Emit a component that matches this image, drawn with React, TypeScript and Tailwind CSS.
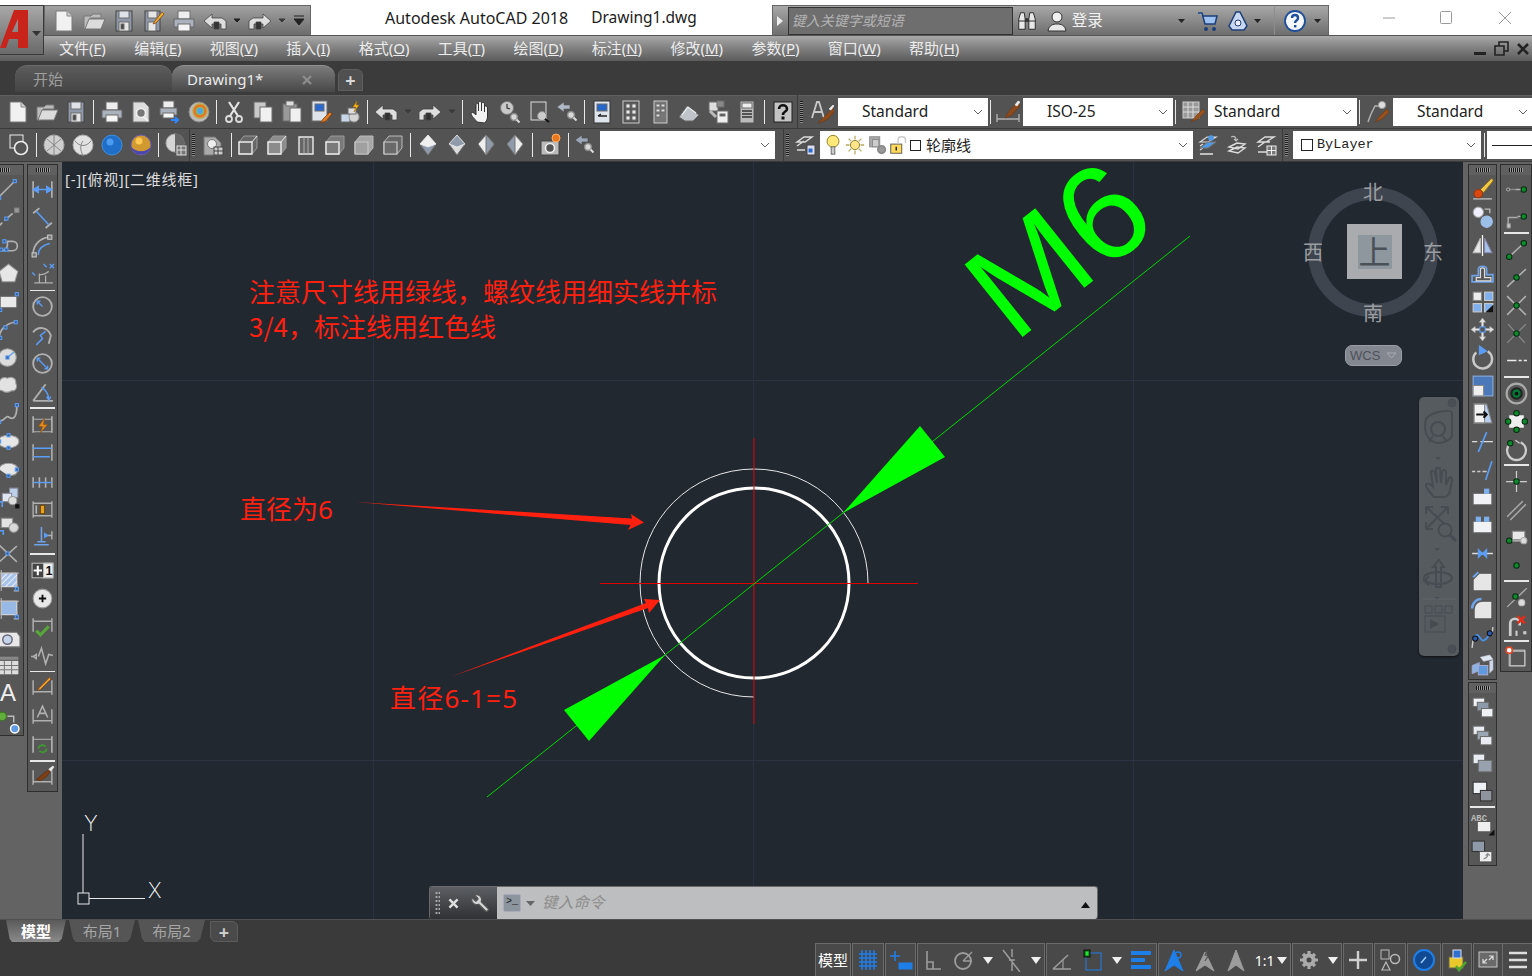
import type { ReactNode } from "react";
import { Wrench } from "lucide-react";

const W = "#ececec";
const G = "#b0b0b0";
const B = "#5b9df5";
const O = "#e08a1e";
const GR = "#0c8a2c";

const p = (d: string, s = G, w = 1.5, f = "none") => <path d={d} stroke={s} strokeWidth={w} fill={f} />;
const r = (x: number, y: number, w: number, h: number, f = W, s = "#6d6d6d") => <rect x={x} y={y} width={w} height={h} fill={f} stroke={s} />;
const c = (x: number, y: number, R: number, f = "none", s = G, w = 1.5) => <circle cx={x} cy={y} r={R} fill={f} stroke={s} strokeWidth={w} />;
const g = (x: number, y: number) => <rect x={x - 1.5} y={y - 1.5} width={3} height={3} fill="#3b5f95" stroke={B} />;
const n = (x: number, y: number) => <circle cx={x} cy={y} r={2.6} fill={GR} stroke="#0a2a10" />;
const mag = (x: number, y: number) => <>{c(x, y, 3.4, "#d8d8d8", "#8a8a8a")}{p(`M${x + 2.5} ${y + 2.5}l3 3`, "#ddd", 2)}</>;
const dimEnds = <>{p("M3 4v16M21 4v16", G, 1.6)}</>;
const dimBase = <>{p("M3 5v14M21 5v14M3 16h18", G, 1.4)}</>;
const box = (f1: string, f2: string) => <>{p("M3 9l5-6h13v12l-5 6H3z", "#9b9b9b", 1, f2)}{p("M3 9h13v12H3z", W, 1.4, f1)}{p("M16 9l5-6", W, 1)}</>;
const gem = (a: string, b: string) => <>{p("M12 2l8 9-8 11-8-11z", "#777", 1, a)}{p("M4 11l8-9 8 9-8 3z", "#eee", 0.8, b)}</>;
const card = (a = "#e9edf3", b = "#e9edf3", d = "#9aa6b4") => <>{r(3, 3, 11, 8, a)}{r(7, 8, 11, 8, d)}{r(10, 13, 11, 8, b)}</>;

const icons: Record<string, ReactNode> = {
  new: <>{p("M4 2h11l5 5v15H4z", "#7a7a7a", 1, "#f1f1f1")}{p("M15 2v5h5", "#8a8a8a", 1, "#cfcfcf")}</>,
  open: <>{p("M2 7h7l2-2h8v4H8l-3 11H2z", "#777", 1, "#bcbcbc")}{p("M7 10h16l-4 10H3z", "#777", 1, "#dcdcdc")}</>,
  save: <>{r(4, 2, 16, 20, "#8e98a8", "#444")}{r(7, 2, 10, 7, "#dfe3e8")}{r(7, 13, 10, 9, "#e6e6e6")}{r(9, 15, 3, 5, "#444")}</>,
  saveas: <>{r(3, 2, 15, 20, "#8e98a8", "#444")}{r(6, 13, 8, 9, "#e6e6e6")}{r(6, 2, 9, 7, "#e6e6e6")}{p("M20 3l-7 9-2 3 3-1 8-9z", "#8a4a10", 0.8, "#f0b030")}</>,
  print: <>{r(6, 2, 12, 8, "#eee")}{p("M2 10h20v8H2z", "#666", 1, "#aab2bd")}{r(6, 15, 12, 7, "#f5f5f5")}</>,
  preview: <>{p("M4 2h11l5 5v15H4z", "#777", 1, "#ddd")}{c(12, 13, 4.5, "#777", "#eee", 1.6)}{p("M15 17l4 4", "#eee", 2)}</>,
  plot: <>{r(5, 1, 11, 7, "#eee")}{p("M2 8h17v7H2z", "#666", 1, "#aab2bd")}{r(5, 13, 11, 5, "#f5f5f5")}{p("M13 20h7m-3-3l3 3-3 3", "#2f86ff", 2)}</>,
  publish: <>{c(12, 12, 10, "#bcbcbc", "#888", 1)}{c(13, 11, 7, "#e2752a", "#c9a13a", 1.5)}{c(13, 11, 3.5, "#4fa3e8", "#88c060", 1.2)}</>,
  cut: <>{p("M7 2l9 14M17 2L8 16", "#e5e5e5", 2.2)}{c(7, 19, 3, "none", "#dcdcdc", 1.8)}{c(17, 19, 3, "none", "#dcdcdc", 1.8)}</>,
  copy: <>{r(3, 2, 12, 16, "#c9c9c9")}{r(9, 7, 12, 15, "#f0f0f0")}</>,
  paste: <>{r(3, 4, 14, 17, "#999")}{r(6, 1, 8, 5, "#ddd")}{r(10, 8, 11, 14, "#f0f0f0")}</>,
  match: <>{r(3, 1, 15, 20, "#dfe4ea")}{r(6, 4, 9, 7, "#2a6ad0")}{p("M21 12l-7 7-2 4 5-2 6-7z", "#7a3a10", 0.8, "#dd7c22")}</>,
  mprop: <>{r(3, 14, 9, 8, "#c8d6ea")}{c(16, 17, 5, "#d5d5d5", "#999", 1)}{r(10, 8, 8, 6, "#ddd")}{p("M19 1l-4 6h3l-2 5 5-7h-3z", "#b06a00", 0.6, "#ffc21a")}</>,
  undo: <>{p("M1 12l8-7v4h10l4 3v8h-5v-5H9v4z", "#444", 0.8, "#dedede")}{p("M11 13h5v7h-5z", "#444", 0.8, "#333")}</>,
  redo: <>{p("M23 12l-8-7v4H5l-4 3v8h5v-5h9v4z", "#444", 0.8, "#dedede")}{p("M8 13h5v7H8z", "#444", 0.8, "#333")}</>,
  drop: <>{p("M9 10h6l-3 3z", "#222", 1, "#222")}</>,
  dropg: <>{p("M9 10h6l-3 3z", "#3b3b3b", 1, "#3b3b3b")}</>,
  pan: <>{p("M8 22c-2-3-6-6-6-9 1-1.500 3 0 5 2V5c0-2 2.500-2 2.500 0v6-8c0-2 3-2 3 0v8-7c0-2 3-2 3 0v8-5c0-2 3-1 3 1v9c0 3-2 5-3 6z", "#333", 1, "#f2f2f2")}</>,
  zoomrt: <>{c(9, 8, 6.5, "#c9c9c9", "#777", 1)}{p("M9 4v4l3 1", "#333", 1.2)}{mag(16, 17)}</>,
  zoomwin: <>{r(4, 2, 15, 18, "#5a5a5a", "#dcdcdc")}{c(15, 16, 4.5, "#ccc", "#888", 1)}{p("M18 19l4 3", "#111", 2)}</>,
  zoomprev: <>{p("M1 7l7-5v3h6v4H8v3z", "#555", 0.6, "#aeb8c6")}{mag(15, 15)}</>,
  props: <>{r(4, 1, 16, 22, "#dfe5ec", "#333")}{r(7, 4, 10, 7, "#2668c8")}{p("M8 16h9M8 16l3-2", "#222", 1.4)}</>,
  dc: <>{r(4, 1, 16, 22, "#555", "#ccc")}{r(7, 4, 4, 4, "#eee")}{r(13, 4, 4, 4, "#eee")}{r(7, 10, 4, 4, "#eee")}{r(13, 10, 4, 4, "#eee")}{r(7, 16, 4, 4, "#eee")}{r(13, 16, 4, 4, "#eee")}</>,
  tp: <>{r(6, 1, 13, 22, "#777", "#ccc")}{r(8, 4, 4, 3, "#ddd")}{r(13, 4, 4, 3, "#ddd")}{r(8, 9, 4, 3, "#ddd")}{r(13, 9, 4, 3, "#ddd")}{r(8, 14, 4, 3, "#ddd")}</>,
  ssm: <>{p("M2 17l8-11 12 9-6 6H8z", "#666", 1, "#bfc4ca")}{p("M5 15l6-8 8 6", "#eee", 1.2)}</>,
  markup: <>{r(3, 2, 9, 9, "#ddd")}{r(11, 1, 7, 6, "#888")}{r(11, 11, 11, 12, "#eee")}{r(14, 14, 5, 2, "#555")}{p("M4 11l6 6", "#bbb", 3)}</>,
  calc: <>{r(5, 1, 14, 22, "#bbb", "#555")}{r(7, 3, 10, 5, "#eee")}{p("M7 11h10M7 14h10M7 17h10", "#333", 1.5)}</>,
  helpq: <>{r(3, 2, 18, 20, "#c4c4c4", "#222")}{p("M8 9c0-5 8-5 8 0 0 3-4 2-4 6", "#111", 2.6)}{r(11, 17, 2, 2, "#111", "#111")}</>,
  txtstyle: <>{p("M2 18L7 2h2l5 16M4 12h8", "#c8c8c8", 1.8)}{p("M23 8l-8 8-7 7 4-1 6-3 7-8z", "#6e3512", 0.6, "#8a4a1d")}{p("M23 5l-4 4 2 1 3-4z", "#eee", 0.6, "#eee")}</>,
  dimstyle: <>{p("M1 14v8M23 14v8M1 19h22", G, 1.4)}{p("M22 2l-9 9-4 7 7-3 8-9z", "#6e3512", 0.6, "#8a4a1d")}{p("M22 1l-3 4 2 1 3-4z", "#eee", 0.6, "#eee")}</>,
  tabstyle: <>{r(2, 2, 16, 16, "#999", "#ccc")}{p("M2 7h16M2 12h16M7 2v16M12 2v16", "#ddd", 1)}{p("M22 9l-7 7-5 6 7-3 7-7z", "#6e3512", 0.6, "#9a521d")}</>,
  mlstyle: <>{p("M3 22l3-8 4-8h6", G, 1.5)}{c(17, 5, 3.6, "#ddd", "#999", 1)}{p("M22 9l-7 7-5 6 7-3 7-7z", "#6e3512", 0.6, "#9a521d")}</>,
  vp: <>{r(3, 2, 13, 13, "#555", "#eee")}{c(14, 15, 6.5, "#555", "#eee", 1.6)}</>,
  s1: <>{c(12, 12, 10, "#cfcfcf", "#aaa", 1)}{p("M5 6l14 12M19 6L5 18M12 2v20", "#888", 1)}</>,
  s2: <>{c(12, 12, 10, "#e2e2e2", "#aaa", 1)}{p("M4 8c5 6 11 6 16 0M12 22c-3-4-3-10 0-14", "#888", 1)}</>,
  s3: <>{c(12, 12, 10, "#1f6ec8", "#3f8ee0", 1)}{c(10, 9, 3.5, "#4b9bef", "#4b9bef", 0)}</>,
  s4: <>{c(12, 12, 10, "#d09a30", "#6a5ab0", 1)}{p("M3 15c4 5 14 5 18 0-2 8-16 8-18 0z", "#4a46b0", 1, "#4a46b0")}{c(10, 8, 3.5, "#ffc850", "#ffc850", 0)}</>,
  mat: <>{c(11, 10, 9, "#d5d5d5", "#aaa", 1)}{p("M11 1a9 9 0 010 18", "#666", 1, "#666")}{r(13, 13, 9, 9, "#777", "#ddd")}{p("M13 17h9M17 13v9", "#ddd", 1)}</>,
  render: <>{p("M3 4h11l6 6v12H3z", "#777", 1, "#aaa")}{c(11, 11, 4.5, "#eee", "#777", 1)}{r(13, 14, 9, 8, "#ccc", "#444")}{p("M13 18h9M17 14v8", "#444", 1)}</>,
  b1: box("none", "#676767"),
  b2: box("none", "#8c8c8c"),
  b3: <>{p("M5 4h14v17H5z", W, 1.4, "#666")}{p("M10 4v17M14 4v17", G, 1)}</>,
  b4: <>{p("M3 9l5-6h13v12l-5 6H3z", "#999", 1, "#7a7a7a")}{p("M3 9h13v12H3z", W, 1.4, "none")}</>,
  b5: <>{p("M3 9l5-6h13v12l-5 6H3z", "#bbb", 1, "#a6a6a6")}{p("M3 9h13v12H3z", "#c6c6c6", 1.2, "#a0a0a0")}</>,
  b6: <>{p("M3 9l5-6h13v12l-5 6H3z", "#bbb", 1, "#666")}{p("M3 9h13v12H3z", "#ccc", 1.2, "#6a6a6a")}</>,
  g1: gem("#8f9aaa", "#f0f0f0"),
  g2: gem("#dcdcdc", "#8f9aaa"),
  g3: <>{p("M12 2l8 9-8 11-8-11z", "#777", 1, "#eee")}{p("M12 2v20l8-11z", "#777", 1, "#8f9aaa")}</>,
  g4: <>{p("M12 2l8 9-8 11-8-11z", "#777", 1, "#8f9aaa")}{p("M12 2v20l8-11z", "#777", 1, "#eee")}</>,
  cam: <>{r(3, 8, 18, 14, "#bbb", "#444")}{c(12, 15, 4.5, "#555", "#eee", 1.6)}{c(18, 5, 4, "#e8781e", "#ffb060", 1)}</>,
  ucsb: <>{p("M1 7l7-5v3h6v4H8v3z", "#444", 0.6, "#9aa5b5")}{mag(14, 14)}</>,
  layprop: <>{p("M3 9l7-5h8l-7 5zM3 13l7-5M3 17h8", "#ddd", 1.4)}{r(13, 12, 8, 10, "#dde", "#444")}{r(15, 16, 3, 3, "#2a6ad0", "#2a6ad0")}</>,
  bulb: <>{c(12, 8, 6.5, "#ffe87a", "#8a7a20", 1)}{r(10, 14, 4, 8, "#ccc", "#666")}</>,
  sun: <>{c(12, 12, 5, "#ffe48a", "#8a7a20", 1)}{p("M12 2v4M12 18v4M2 12h4M18 12h4M5 5l3 3M16 16l3 3M19 5l-3 3M8 16l-3 3", "#b8a860", 1.4)}</>,
  freeze: <>{r(4, 3, 11, 11, "#aaa", "#888")}{r(7, 6, 7, 8, "#ccc", "#888")}{c(17, 17, 4, "#999", "#888", 2)}</>,
  lock: <>{r(3, 11, 12, 10, "#ffd95a", "#555")}{p("M11 11V6c0-4 8-4 8 0v4", "#ccc", 1.6)}{p("M9 14v4", "#222", 1.6)}</>,
  lay1: <>{p("M4 9l7-5h9l-8 5zM4 13l3-2M4 17l3-2", "#ddd", 1.2)}{p("M4 21h13", "#ddd", 1.6)}{p("M4 15l8-6h8l-8 6z", "#777", 1, "#4e9ae8")}{c(15, 5, 2.8, "#4e9ae8", "#4e9ae8", 0)}</>,
  lay2: <>{p("M6 4c4-2 5 1 5 3m-2-1l2 2 2-2", "#bbb", 1.2)}{p("M4 14l8-4 8 1-7 5zM4 18l8-4 8 1-7 5z", "#ddd", 1.4)}</>,
  lay3: <>{p("M4 9l7-5h9l-8 5zM4 14l7-5h5M4 19h9", "#ddd", 1.4)}{r(13, 13, 9, 9, "#777", "#eee")}{p("M13 17.500h9M17.500 13v9", "#eee", 1)}</>,

  line: <>{p("M3 19L17 5", G, 1.5)}{g(3, 20)}{g(18, 4)}</>,
  xline: <>{p("M2 21l4-4M8 15l8-7", G, 1.6)}{p("M18 6l3-2", "#777", 3)}{r(18, 3, 4, 4, "#999", "#888")}{g(10, 13)}</>,
  pline: <>{p("M3 15c4 4 8 0 8-4V8h5c6 0 6 9 0 9H7", G, 1.6)}{g(8, 8)}{g(5, 16)}{g(10, 16)}</>,
  polygon: <>{p("M12 3l9 7-3 10H6L3 10z", "#999", 1, "#e6e6e6")}</>,
  rect: <>{r(4, 7, 16, 11, "#eaeaea", "#666")}{g(20, 5)}{g(4, 20)}</>,
  arc: <>{p("M3 21c0-9 7-15 15-16", G, 1.6)}{g(4, 20)}{g(9, 10)}{g(19, 5)}</>,
  circle: <>{c(11, 12, 8.5, "#dcdcdc", "#999", 1)}{p("M11 12l6-5", B, 1.2)}{g(11, 12)}</>,
  revcloud: <>{p("M4 7c1-3 5-3 7-2 4-2 9 0 8 5 2 3 0 8-4 7-3 2-7 2-9 0-4 0-5-5-3-7-1-1 0-3 1-3z", "#999", 1, "#e2e2e2")}</>,
  spline: <>{p("M3 19c4 1 6-4 8-4s3 3 6 1 3-7 3-11", G, 1.7)}{g(3, 20)}{g(20, 4)}</>,
  ellipse: <>{p("M2 12c0-4 5-6 10-6s10 2 10 6-5 6-10 6S2 16 2 12z", "#999", 1, "#e6e6e6")}{g(12, 6)}{g(12, 18)}{g(3, 12)}</>,
  earc: <>{p("M3 12c0-4 5-6 9-6s9 2 9 6-4 6-9 6", "#999", 1, "#e6e6e6")}{g(12, 18)}{g(20, 12)}</>,
  insert: <>{r(13, 3, 8, 9, "#bcd0ea", "#889")}{r(6, 8, 9, 8, "#dfe6ef", "#889")}{c(16, 15, 4, "#ddd", "#999", 1)}{p("M2 16h4v5", B, 1.5)}{r(19, 19, 3, 3, "#111", "#111")}</>,
  block: <>{r(5, 5, 11, 9, "#e2e2e2", "#888")}{c(17, 14, 4.5, "#d8d8d8", "#999", 1)}{p("M2 17h5v4", B, 1.5)}</>,
  xl: <>{p("M2 21L20 5M2 3l18 17", G, 1.5)}{g(11, 12)}</>,
  hatch: <>{r(5, 4, 15, 13, "#a8c4ea", "#ddd")}{p("M5 10l6-6M5 15l11-11M9 17l11-11M15 17l5-5", "#eef", 1)}{p("M2 4h20M5 1v20M20 14v7M17 21h5", "#bbb", 1)}{g(20, 19)}</>,
  grad: <>{r(5, 4, 15, 13, "#98b8e6", "#ddd")}{p("M2 4h20M5 1v20M20 14v7M17 21h5", "#bbb", 1)}{g(20, 19)}</>,
  region: <>{p("M2 7h18l3 4v10H2z", "#777", 1, "#e8e8e8")}{c(11, 14, 4.5, "#c6d6ea", "#667", 1.4)}</>,
  table: <>{r(1, 3, 21, 18, "#ddd", "#555")}{r(1, 3, 21, 4, "#888", "#555")}{p("M1 12h21M1 16h21M8 7v14M15 7v14", "#777", 1)}</>,
  add: <>{c(6, 7, 4, "#62ae3a", "#3d7a20", 1)}{c(18, 19, 4, "#5f9ae0", "#fff", 1.4)}{p("M11 7h6v6", "#bbb", 1.4)}</>,

  dl: <>{dimEnds}{p("M3 12h18M3 12l5-3v6zM21 12l-5-3v6z", B, 1.3, B)}</>,
  da: <>{p("M3 8l6-5M15 22l6-5", G, 1.8)}{p("M6 6l12 13", B, 1.5)}</>,
  darc: <>{p("M3 20C3 11 10 5 18 4", G, 1.7)}{p("M8 21c0-6 5-10 11-11", B, 1.5)}{r(17, 2, 4, 4, "#777", "#ccc")}{r(2, 19, 4, 4, "#777", "#ccc")}</>,
  dord: <>{p("M4 20h18M9 11v9M15 13v7M9 12c4 1 6-1 9-3", G, 1.2)}{p("M2 10l3 3M13 2l3 3M19 2l4 4M23 2l-4 4", B, 1.3)}</>,
  dr: <>{c(12, 12, 9, "none", G, 1.8)}{p("M12 12L7 7m3 0H7v3", B, 1.3)}</>,
  dj: <>{p("M3 9c4-6 14-6 17 3l-2 8", G, 1.8)}{p("M6 21l6-6-2-3 5-4", B, 1.4)}</>,
  dd: <>{c(12, 12, 9, "none", G, 1.8)}{p("M7 7l10 10M7 10V7h3M17 14v3h-3", B, 1.3)}</>,
  dan: <>{p("M3 21h19M3 21L15 5", G, 1.7)}{p("M11 8c4 2 7 7 7 12m-2-3l2 3 2-3", B, 1.4)}</>,
  dq: <>{dimEnds}{p("M3 7h18M3 19h18", G, 1)}{p("M14 6l-6 8h4l-2 6 7-8h-4z", "#8a4a00", 0.5, O)}</>,
  dbase: <>{p("M3 4v16M21 4v16", G, 1.5)}{p("M3 8h18M3 16h16", B, 1.5)}</>,
  dcont: <>{p("M3 8v10M9 8v10M15 8v10M21 8v10", G, 1.5)}{p("M3 13h18", B, 1.4)}</>,
  dsp: <>{p("M3 4v16M21 4v16M3 6h18M3 18h18", G, 1.3)}{r(10, 8, 4, 8, "#e8a020", "#704a00")}{p("M6 8v8", G, 1.6)}</>,
  dbr: <>{p("M11 2v14M4 19h14M7 16h8", "#6ea3ea", 1.5)}{p("M14 10h7M21 6v8", G, 1.4)}{p("M14 8v4l3-2z", B, 1, B)}</>,
  dtol: <>{r(2, 5, 20, 14, "#444", "#bbb")}{r(13, 5, 9, 14, "#eee", "#bbb")}{p("M7.500 7.500v9M3.500 12h8", "#fff", 2)}<text x="15" y="16.500" fontSize="12" fontWeight="700" fontFamily="Liberation Sans" fill="#111">1</text></>,
  dcen: <>{c(12, 12, 9, "#e8e8e8", "#9a9a9a", 1)}{p("M8.500 12h7M12 8.500v7", "#111", 1.8)}</>,
  dins: <>{p("M3 3v13M21 3v13M3 6h18", G, 1.4)}{p("M6 15l4 4 8-8", "#57a63a", 3)}</>,
  djl: <>{p("M1 13h3M3 13l3-2v4zM8 13l3-8 4 15 3-9 4 1", G, 1.5)}</>,
  ded: <>{dimBase}{p("M19 2L9 12l-2 3 3-1 10-10z", "#7a3a10", 0.6, "#f0a030")}</>,
  dte: <>{dimBase}{p("M7 13l5-11 5 11M9 9h6", G, 1.5)}</>,
  dup: <>{dimEnds}{p("M3 7h18", G, 1)}{p("M8 16a4 4 0 017-2m1 2a4 4 0 01-7 2", "#3f9a30", 1.7)}</>,
  dst: <>{dimBase}{p("M22 2l-9 6-7 6 4 1 6-4z", "#5a2a0a", 0.6, "#7c3f18")}{p("M22 1l-4 3 2 2 3-4z", "#eee", 0.6, "#eee")}</>,

  erase: <>{p("M3 21h18", G, 1.5)}{p("M20 2c1-1 3 1 2 2l-9 11-3-3z", "#8a6a10", 0.8, "#f2c84a")}{c(8, 16, 4, "#d8480f", "#a03000", 0.8)}</>,
  cpy: <>{c(8, 7, 5, "#eef", "#999", 1)}{c(16, 16, 5.500, "#9cbfe8", "#9cbfe8", 1)}{p("M14 4h5v4", "#bbb", 1.3)}</>,
  mir: <>{p("M12 2v20", "#fff", 1.2)}{p("M10 5v14H3z", "#bbb", 1, "#e8e8e8")}{p("M14 5v14h7z", "#88a", 1, "#a8c4ea")}</>,
  off: <>{p("M2 20v-6h6V8c0-4 8-4 8 0v5h6v7z", "#6ea3ea", 1.6)}{p("M6 19h14v-3h-6V8c0-2-4-2-4 0v8H6z", "#ddd", 1.2)}</>,
  arr: <>{r(3, 3, 8, 8, "#eee", "#888")}{r(14, 3, 8, 8, "#7fb0ee", "#ccc")}{r(3, 14, 8, 8, "#7fb0ee", "#ccc")}{r(14, 14, 8, 8, "#7fb0ee", "#ccc")}{p("M16 22l6-6v6z", "#111", 1, "#111")}</>,
  mov: <>{p("M12 1l3 4h-2v5h-2V5H9zM12 23l3-4h-2v-5h-2v5H9zM1 12l4-3v2h5v2H5v2zM23 12l-4-3v2h-5v2h5v2z", "#aaa", 0.5, "#e2e2e2")}{r(9.500, 9.500, 5, 5, "#555", B)}</>,
  rot: <>{p("M6 7a9 9 0 1011-1", "#c8c8c8", 2.4)}{p("M9 1l7 5-7 3z", B, 1, B)}</>,
  scl: <>{r(3, 3, 19, 19, "#4b78b8", "#8fb0e0")}{r(3, 12, 10, 10, "#eee", "#888")}</>,
  str: <>{p("M4 3h12l5 18H4z", "#888", 1, "#b6cfee")}{p("M4 3h10v18H4z", "#888", 1, "#f2f2f2")}{p("M6 13h10m-3-3l3 3-3 3", "#111", 2)}</>,
  trim: <>{p("M2 12h5M10 12h12", "#ddd", 1.2)}{p("M8 22L16 3", B, 1.6)}</>,
  ext: <>{p("M2 14h3M7 14h3M12 14h4", "#ccc", 1.4)}{p("M15 22l6-18", B, 1.6)}</>,
  brk: <>{r(3, 8, 18, 11, "#f0f2f5", "#666")}{r(14, 4, 4, 4, "#7fb0ee", "#7fb0ee")}</>,
  brk2: <>{r(3, 8, 18, 11, "#f0f2f5", "#666")}{r(6, 4, 4, 4, "#7fb0ee", "#7fb0ee")}{r(14, 4, 4, 4, "#7fb0ee", "#7fb0ee")}</>,
  join: <>{p("M2 12h20", "#ddd", 1.4)}{p("M8 8l4 4-4 4zM16 8l-4 4 4 4z", B, 1, B)}</>,
  cham: <>{p("M9 4h12v17H3V10z", "#555", 1, "#e6e6e6")}{p("M3 8l5-5", "#6ea3ea", 2)}</>,
  fil: <>{p("M12 4h9v17H4v-9c0-5 4-8 8-8z", "#555", 1, "#e6e6e6")}{p("M2 11c0-5 4-9 9-9", "#6ea3ea", 2.4)}</>,
  bl: <>{p("M2 22l1-8M22 2l-1 8", "#ccc", 1.4)}{p("M4 12c4-7 6 4 9 3s5-5 6-6", "#4a90e8", 1.8)}{c(5, 13, 2.500, "#2a5ab0", "#111", 1)}{c(19, 8, 2.500, "#2a5ab0", "#111", 1)}</>,
  expl: <>{p("M10 4l9-2 3 4-9 2z", "#ccd", 0.6, "#dfe7f2")}{p("M2 12l7-3v8l-7 3z", "#aac", 0.6, "#8eb2e2")}{r(8, 12, 9, 9, "#5f9ae0", "#aac")}{p("M19 8l3-1v9l-3 3z", "#ccd", 0.6, "#cfdcf0")}</>,

  c1: <>{r(3, 3, 11, 8, "#f0f2f6")}{r(7, 7, 11, 8, "#8c99a8")}{r(11, 13, 11, 8, "#eef1f5")}</>,
  c2: card(),
  c3: <>{r(3, 3, 11, 9, "#e9edf3")}{r(8, 9, 13, 11, "#98a2ae")}</>,
  c4: <>{r(3, 3, 13, 11, "#eef1f5", "#333")}{r(10, 11, 11, 10, "#8e959e", "#333")}</>,
  c5: <><text x="1" y="10" fontSize="8.500" fontWeight="700" fontFamily="Liberation Mono" fill="#bbb">ABC</text>{r(7, 10, 13, 10, "#eee", "#555")}{p("M19 23l4-4v4z", "#111", 1, "#111")}</>,
  c6: <>{r(2, 2, 12, 10, "#8f9aa8", "#333")}{r(9, 12, 12, 10, "#eee", "#555")}{p("M13 19c2 0 4-2 4-4m-2 1l2-2 2 2", "#888", 1.2)}</>,

  n1: <>{p("M4 12h7", "#888", 1.4)}{c(4, 12, 1.5, "#444", "#aaa", 1)}{p("M11 12h6", G, 1.4)}{n(19, 12)}</>,
  n2: <>{p("M4 21v-9h9", "#aaa", 1.4, "none")}{r(3, 18, 3, 4, "#ccc", "#999")}{p("M13 11h4", G, 1.4)}{n(19, 11)}</>,
  n3: <>{p("M5 19L19 6", G, 1.5)}{n(5, 19)}{n(19, 6)}</>,
  n4: <>{p("M3 21L21 4", G, 1.5)}{n(12, 12)}</>,
  n5: <>{p("M3 3l18 18M21 3L3 21", G, 1.5)}{n(12, 12)}</>,
  n6: <>{p("M4 3l16 18M21 3L3 21", "#888", 1.3, "none")}{n(12, 12)}</>,
  n7: <>{p("M3 11h9M14 11h3M19 11h3", W, 1.5)}</>,
  n8: <>{c(12, 12, 9.500, "none", "#aaa", 2)}{c(12, 12, 5, "#073", "#222", 2)}{c(12, 12, 1.8, "#111", "#111", 0)}</>,
  n9: <>{p("M7 8h10v8H7z", "#eee", 4, "#eee")}{n(12, 4)}{n(12, 20)}{n(4, 12)}{n(20, 12)}</>,
  n10: <>{p("M8 5a9 9 0 108 0", "#ccc", 2.2)}{p("M11 3l4 3", "#ccc", 1.2)}{n(6, 6)}</>,
  n11: <>{p("M12 2v20M2 12h20", "#ccc", 1.2)}{n(12, 12)}</>,
  n12: <>{p("M3 19L18 4M6 22L21 7", "#aaa", 1.4)}</>,
  n13: <>{r(8, 6, 12, 8, "#e8e8e8", "#888")}{p("M4 15h14", "#aaa", 2)}{n(5, 15)}{c(19, 15, 3, "#ddd", "#aaa", 1)}</>,
  n14: <>{n(12, 12)}</>,
  n15: <>{p("M3 21L22 3", "#aaa", 1.3)}{n(11, 11)}{c(17, 17, 3, "#ddd", "#bbb", 1)}</>,
  n16: <>{p("M6 22V10c0-6 9-6 9 0v2", "#ccc", 2.6)}{p("M12 22v-5", "#ccc", 2)}{r(19, 18, 2, 2, "#ccc", "#ccc")}{p("M13 3l7 7M20 3l-7 7", "#e0301a", 2.4)}</>,
  n17: <>{r(5, 5, 15, 15, "none", "#ccc")}{r(6, 6, 14, 14, "none", "#bbb")}{c(5, 5, 3, "#fff", "#e04a28", 1.6)}</>,
};

function Ico({ name, size = 24 }: { name: string; size?: number }) {
  return (
    <svg width={size} height={size} viewBox="0 0 24 24" className="shrink-0">
      {icons[name]}
    </svg>
  );
}

function Cell({ name, w = 29 }: { name: string; w?: number }) {
  return (
    <div className="flex items-center justify-center h-full shrink-0" style={{ width: w }}>
      <Ico name={name} />
    </div>
  );
}

function Sep({ w = 7 }: { w?: number }) {
  return (
    <div className="flex items-center justify-center h-full shrink-0" style={{ width: w }}>
      <div className="w-px h-[24px] bg-[#e8e8e8]" />
    </div>
  );
}

function Grip() {
  return <div className="w-[3px] h-[22px] mx-[2px] shrink-0 bg-[repeating-linear-gradient(to_bottom,#1c1c1c_0,#1c1c1c_1px,#8a8a8a_1px,#8a8a8a_2px)]" />;
}

function Combo({ width, text, textClass = "pl-[24px]", className = "" }: { width: number | string; text?: ReactNode; textClass?: string; className?: string }) {
  return (
    <div className={`relative flex items-center bg-white h-[28px] shrink-0 text-[#222] text-[15.500px] ${className}`} style={{ width }}>
      <div className={`flex items-center ${textClass}`}>{text}</div>
      <svg width="10" height="6" viewBox="0 0 10 6" className="absolute right-[5px] top-[11px]">
        <path d="M1 1l4 4 4-4" stroke="#666" fill="none" />
      </svg>
    </div>
  );
}

function Toolbar1() {
  return (
    <div className="flex items-stretch h-[36px] bg-[#3b3b3b] pt-[3px]">
      <div className="flex items-center w-[797px] bg-[#535353] pl-[3px] border-t border-[#5f5f5f]">
        <Cell name="new" /><Cell name="open" /><Cell name="save" /><Sep />
        <Cell name="print" /><Cell name="preview" /><Cell name="plot" /><Cell name="publish" /><Sep w={6} />
        <Cell name="cut" /><Cell name="copy" /><Cell name="paste" /><Cell name="match" /><Cell name="mprop" /><Sep />
        <Cell name="undo" /><Cell name="dropg" w={15} /><Cell name="redo" /><Cell name="dropg" w={15} /><Sep />
        <Cell name="pan" /><Cell name="zoomrt" /><Cell name="zoomwin" /><Cell name="zoomprev" /><Sep w={5} />
        <Cell name="props" /><Cell name="dc" /><Cell name="tp" /><Cell name="ssm" /><Cell name="markup" /><Cell name="calc" /><Sep />
        <Cell name="helpq" />
      </div>
      <div className="flex items-center flex-1 ml-[1px] bg-[#535353] border-t border-[#5f5f5f] overflow-hidden">
        <Grip />
        <Cell name="txtstyle" w={33} />
        <Combo width={150} text="Standard" />
        <Sep w={4} />
        <Cell name="dimstyle" w={31} />
        <Combo width={150} text="ISO-25" />
        <Sep w={4} />
        <Cell name="tabstyle" w={31} />
        <Combo width={149} text="Standard" textClass="pl-[6px]" />
        <Sep w={4} />
        <Cell name="mlstyle" w={32} />
        <Combo width={140} text="Standard" />
      </div>
    </div>
  );
}

function Toolbar2() {
  return (
    <div className="flex items-stretch h-[34px] bg-[#3b3b3b] py-[1px] text-[14px]">
      <div className="flex items-center w-[189px] bg-[#535353] pl-[4px]">
        <Cell name="vp" /><Sep w={6} />
        <Cell name="s1" /><Cell name="s2" /><Cell name="s3" /><Cell name="s4" /><Sep w={6} />
        <Cell name="mat" />
      </div>
      <div className="flex items-center w-[593px] ml-[1px] bg-[#535353]">
        <Grip />
        <Cell name="render" w={32} /><Sep w={4.5} />
        <Cell name="b1" /><Cell name="b2" /><Cell name="b3" /><Cell name="b4" /><Cell name="b5" /><Cell name="b6" /><Sep w={6} />
        <Cell name="g1" /><Cell name="g2" /><Cell name="g3" /><Cell name="g4" /><Sep w={6} />
        <Cell name="cam" /><Sep w={7} />
        <Cell name="ucsb" w={28} />
        <Combo width={175} />
      </div>
      <div className="flex items-center w-[498px] ml-[1px] bg-[#535353]">
        <Grip />
        <Cell name="layprop" />
        <Combo
          width={373}
          textClass="pl-[2px]"
          text={
            <>
              <Ico name="bulb" size={22} /><Ico name="sun" size={22} /><Ico name="freeze" size={22} /><Ico name="lock" size={22} />
              <div className="w-[11px] h-[11px] border border-[#222] bg-white" />
              <span className="text-[15px] pl-[5px]">轮廓线</span>
            </>
          }
        />
        <Cell name="lay1" /><Cell name="lay2" /><Cell name="lay3" />
      </div>
      <div className="flex items-center flex-1 ml-[1px] bg-[#535353] overflow-hidden">
        <Grip />
        <Combo
          width={188}
          className="ml-[3px]"
          textClass="pl-[8px]"
          text={
            <>
              <div className="w-[12px] h-[12px] border border-[#222] bg-white mr-[4px]" />
              <span className="text-[13.500px] [font-family:'Liberation_Mono',monospace]">ByLayer</span>
            </>
          }
        />
        <Sep w={6} />
        <Combo width={60} textClass="pl-[5px]" text={<div className="w-[55px] h-px bg-[#222]" />} />
      </div>
    </div>
  );
}

function Dock({ items, className = "", iconClass = "" }: { items: string[]; className?: string; iconClass?: string }) {
  return (
    <div className={`flex flex-col bg-[#575757] border border-[#2e2e2e] shrink-0 ${className}`}>
      <div className="h-[10px] bg-[#606060] flex items-center justify-center">
        <div className="w-[14px] h-[4px] bg-[repeating-linear-gradient(to_right,#161616_0,#161616_1px,#9a9a9a_1px,#9a9a9a_2px)]" />
      </div>
      {items.map((it, i) =>
        it === "|" ? (
          <div key={i} className="h-[4px] flex items-center justify-center">
            <div className="h-[1.500px] w-[25px] bg-[#e8e8e8]" />
          </div>
        ) : (
          <div key={i} className={`h-[28.400px] flex items-center justify-center ${iconClass}`}>
            <Ico name={it} size={25} />
          </div>
        ),
      )}
    </div>
  );
}

const leftA = ["line", "xline", "pline", "polygon", "rect", "arc", "circle", "revcloud", "spline", "ellipse", "earc", "insert", "block", "xl", "hatch", "grad", "region", "table", "TXT", "add"];
const leftB = ["dl", "da", "darc", "dord", "|", "dr", "dj", "dd", "dan", "|", "dq", "dbase", "dcont", "dsp", "dbr", "|", "dtol", "dcen", "dins", "djl", "|", "ded", "dte", "dup", "|", "dst"];
const rightA = ["erase", "cpy", "mir", "off", "arr", "mov", "rot", "scl", "str", "trim", "ext", "brk", "brk2", "join", "cham", "fil", "bl", "expl"];
const rightA2 = ["c1", "c2", "c3", "c4", "|", "c5", "c6"];
const rightB = ["n1", "n2", "|", "n3", "n4", "n5", "n6", "n7", "|", "n8", "n9", "n10", "|", "n11", "n12", "n13", "n14", "|", "n15", "n16", "|", "n17"];

function LeftDockA() {
  return (
    <div className="flex flex-col w-[24px] bg-[#575757] border-r border-b border-t border-[#2e2e2e] shrink-0 overflow-hidden">
      <div className="h-[10px] bg-[#606060] flex items-center">
        <div className="w-[10px] h-[4px] bg-[repeating-linear-gradient(to_right,#161616_0,#161616_1px,#9a9a9a_1px,#9a9a9a_2px)]" />
      </div>
      {leftA.map((it, i) => (
        <div key={i} className="h-[28px] w-[24px] flex items-center -translate-x-[4px]">
          {it === "TXT" ? (
            <span className="w-[24px] text-center text-[24px] leading-none text-[#eee] [font-family:'Liberation_Sans',sans-serif]">A</span>
          ) : (
            <Ico name={it} size={25} />
          )}
        </div>
      ))}
    </div>
  );
}

function Drawing() {
  return (
    <svg viewBox="62 162 1401 757" className="absolute inset-0 w-full h-full">
      <path d="M753.500 162v757M373.500 162v757M1133.500 162v757" stroke="#2a3140" />
      <path d="M62 380.500h1401M62 760.500h1401" stroke="#2c3341" />
      <circle cx="754" cy="583" r="95" fill="none" stroke="#fff" strokeWidth="3" />
      <path d="M868 583A114 114 0 1 0 754 697" fill="none" stroke="#e6e6e6" strokeWidth="1" />
      <path d="M600 583.500h318M754 438v286" stroke="#dd0000" strokeWidth="1" />
      <path d="M487 797L1190 236" stroke="#00d800" strokeWidth="1" />
      <polygon points="843,513 920,426 945,457" fill="#00ff00" />
      <polygon points="665,655 564,710 589,741" fill="#00ff00" />
      <polygon points="355,502 632,518.500 631,514 644,522.500 628,530 630.500,525" fill="#ff2010" />
      <polygon points="450,677 646,603 644,599 660,600 649,613 648,608" fill="#ff2010" />
      <text x="1014" y="344" transform="rotate(-38.600 1014 344)" fontSize="135" fill="#00ff00" fontFamily="Liberation Sans, sans-serif">M6</text>
      <path d="M83 834v59M89 898.500h56" stroke="#e8e8e8" />
      <rect x="78" y="893" width="11" height="11" fill="none" stroke="#e8e8e8" />
      <text x="84" y="831" fontSize="21" fontWeight="200" fill="#ffffff" fontFamily="Inter, sans-serif">Y</text>
      <text x="148" y="898" fontSize="21" fontWeight="200" fill="#ffffff" fontFamily="Inter, sans-serif">X</text>
    </svg>
  );
}

function ViewCube() {
  return (
    <div className="absolute left-[1238px] top-[18px] w-[146px] h-[190px] text-[20px] text-[#9b9ea1]">
      <div className="absolute left-[8px] top-[7px] w-[130px] h-[130px] rounded-full border-[13px] border-[#3f454e]" />
      <span className="absolute left-[63px] top-0 leading-[26px]">北</span>
      <span className="absolute left-[3px] top-[60px] leading-[26px]">西</span>
      <span className="absolute left-[123px] top-[60px] leading-[26px]">东</span>
      <span className="absolute left-[63px] top-[121px] leading-[26px]">南</span>
      <div className="absolute left-[47px] top-[44px] w-[55px] h-[55px] bg-[#a9abae] flex items-center justify-center">
        <div className="w-[34px] h-[34px] bg-[#8f979e] flex items-center justify-center text-[32px] leading-none text-[#4a5058]">上</div>
      </div>
      <div className="absolute left-[45px] top-[165px] w-[57px] h-[21px] rounded-[7px] bg-[#83878f] border border-[#9a9da5] flex items-center pl-[4px] gap-[6px] text-[13px] text-[#4d5159] [font-family:'Liberation_Sans',sans-serif]">
        WCS
        <svg width="11" height="7" viewBox="0 0 11 7"><path d="M1 1h9L5.500 6z" fill="none" stroke="#a8abb2" /></svg>
      </div>
    </div>
  );
}

function NavBar() {
  const s = "#474c52";
  return (
    <div className="absolute left-[1357px] top-[235px] w-[40px] h-[259px] rounded-[5px] bg-[#565b60] shadow-[0_1px_2px_#111] flex flex-col items-center">
      <svg width="40" height="259" viewBox="0 0 40 259" fill="none" stroke={s} strokeWidth="2">
        <circle cx="33" cy="6" r="4" fill="#4a4f55" strokeWidth="1" />
        <path d="M7 22c5-8 26-10 26-6v22c0 5-10 8-13 8-8 0-17-8-13-24z" />
        <circle cx="19" cy="32" r="7" />
        <path d="M10 45l4-6M28 45l-4-6" />
        <path d="M16 60h6l-3 3z" fill={s} stroke="none" />
        <path d="M15 100c-3-4-9-9-8-13 3-2 5 1 7 3l-2-14c0-3 3-3 4 0l2 10-1-13c0-3 4-3 4 0l1 13 1-11c1-3 4-2 4 0v13l3-7c2-2 3 0 3 2l-2 11c-1 4-3 6-6 6z" />
        <path d="M7 110l24 22M29 110L7 132M7 110v7M7 110h7M29 110v7M29 110h-7M7 132v-7M7 132h7" />
        <circle cx="26" cy="133" r="6.500" fill="#565b60" />
        <path d="M31 138l6 6" strokeWidth="3" />
        <path d="M15 151h6l-3 3z" fill={s} stroke="none" />
        <path d="M20 163l5 7h-3v20h-5v-20h-3z" />
        <ellipse cx="19" cy="181" rx="14" ry="6" />
        <path d="M10 179l-5 5 5 4" />
        <path d="M15 200h6l-3 3z" fill={s} stroke="none" />
        <path d="M3 202h34" stroke="#5f646a" strokeWidth="1" />
        <rect x="6" y="209" width="7" height="7" strokeWidth="1" />
        <rect x="16" y="209" width="7" height="7" strokeWidth="1" />
        <rect x="26" y="209" width="7" height="7" strokeWidth="1" />
        <rect x="6" y="219" width="20" height="16" strokeWidth="1" />
        <path d="M11 222l9 5-9 5z" fill={s} stroke="none" />
        <circle cx="33" cy="252" r="4" fill="#4a4f55" strokeWidth="1" />
      </svg>
    </div>
  );
}

function CommandLine() {
  return (
    <div className="absolute left-[367px] top-[724px] w-[669px] h-[33px] flex rounded-[3px] overflow-hidden border border-[#6a6a6a] border-b-0 [font-family:'Noto_Sans_CJK_SC',sans-serif]">
      <div className="w-[67px] bg-gradient-to-b from-[#5c5f63] to-[#303134] flex items-center pl-[5px]">
        <div className="w-[5px] h-[24px] bg-[radial-gradient(circle,#aaa_1px,transparent_1.200px)] bg-[length:3px_4px]" />
        <svg width="13" height="13" viewBox="0 0 16 16" className="ml-[7px]"><path d="M3 3l10 10M13 3L3 13" stroke="#ddd" strokeWidth="3" /></svg>
        <Wrench size={20} strokeWidth={1.5} className="ml-[10px] -scale-x-100 text-[#555] fill-[#d5d5d5]" />
      </div>
      <div className="flex-1 bg-[#bdbebf] flex items-center pl-[6px] relative">
        <div className="w-[18px] h-[18px] bg-[#8c949e] border border-[#aab] rounded-[2px] text-[10px] leading-[14px] text-[#222] pl-[2px] [font-family:'Liberation_Mono',monospace]">&gt;_</div>
        <svg width="9" height="5" viewBox="0 0 9 5" className="ml-[5px]"><path d="M0 0h9L4.500 5z" fill="#666" /></svg>
        <span className="ml-[7px] mb-[3px] text-[15.500px] italic text-[#8d8d8d] tracking-[0.2px]">键入命令</span>
        <svg width="9" height="6" viewBox="0 0 9 6" className="absolute right-[7px] top-[15px]"><path d="M0 6h9L4.500 0z" fill="#111" /></svg>
      </div>
    </div>
  );
}

function Canvas() {
  return (
    <div className="relative flex-1 bg-[#212830] overflow-hidden">
      <Drawing />
      <span className="absolute left-[3px] top-[7px] text-[15px] tracking-[0.7px] leading-[20px] text-[#dcdcdc]">[-][俯视][二维线框]</span>
      <div className="absolute left-[187px] top-[111px] text-[26px] leading-[35px] text-[#ff2010] [font-family:'Noto_Sans_CJK_SC',sans-serif]">
        <div>注意尺寸线用绿线，螺纹线用细实线并标</div>
        <div>3/4，标注线用红色线</div>
      </div>
      <span className="absolute left-[178px] top-[329px] text-[26px] leading-[36px] text-[#ff2010]">直径为6</span>
      <span className="absolute left-[328px] top-[518px] text-[26px] tracking-[1.2px] leading-[36px] text-[#ff2010]">直径6-1=5</span>
      <ViewCube />
      <NavBar />
      <CommandLine />
    </div>
  );
}

function StatusGroup({ children, w }: { children: ReactNode; w: number }) {
  return (
    <div className="flex items-center justify-around h-full border border-[#6b6b6b] border-b-0 bg-[#494949] shrink-0 ml-[1px]" style={{ width: w }}>
      {children}
    </div>
  );
}

const Tri = () => (
  <svg width="10" height="7" viewBox="0 0 10 7" className="shrink-0"><path d="M0 0h10L5 7z" fill="#f0f0f0" /></svg>
);

function St({ children }: { children: ReactNode }) {
  return <svg width="24" height="24" viewBox="0 0 24 24" className="shrink-0">{children}</svg>;
}

function StatusBar() {
  const blue = "#1f7fe8";
  const gray = "#9c9c9c";
  return (
    <div className="flex justify-end items-end h-[33px] pr-0">
      <StatusGroup w={36}><span className="text-[15px] text-white">模型</span></StatusGroup>
      <StatusGroup w={32}><St>{p("M3 6h18M3 10h18M3 14h18M3 18h18M6 2v20M10 2v20M14 2v20M18 2v20", blue, 1.5)}</St></StatusGroup>
      <StatusGroup w={31}><St>{p("M6 3v10M1 8h10", blue, 1.6)}{r(10, 15, 13, 6, blue, blue)}</St></StatusGroup>
      <StatusGroup w={128}>
        <St>{p("M6 3v18h14M6 14h6v7", gray, 1.6)}</St>
        <St>{c(11, 13, 8, "none", gray, 1.8)}{p("M11 13l9-9M11 13h9", gray, 1.4)}</St>
        <Tri />
        <St>{p("M3 2l17 22M12 1v8M12 15v8M9 12h6", gray, 1.5)}</St>
        <Tri />
      </StatusGroup>
      <StatusGroup w={111}>
        <St>{p("M3 21h18M3 21L18 7", gray, 1.6)}{p("M13 12v9", gray, 1.2)}</St>
        <St>{r(5, 5, 15, 17, "none", blue)}{r(3, 2, 6, 7, "#0f5a12", "#111")}{r(5, 4, 2, 3, "#1eea32", "#1eea32")}</St>
        <Tri />
        <St>{p("M2 5h20", blue, 4)}{p("M2 12h14", blue, 4)}{p("M2 19h20", blue, 4)}</St>
      </StatusGroup>
      <StatusGroup w={133}>
        <St>{p("M12 2l-9 21 9-6 9 6z", blue, 1, blue)}{c(16, 7, 3, "none", blue, 1.3)}</St>
        <St>{p("M12 4l-9 19 9-6 9 6z", gray, 1, gray)}{p("M15 2l-3 5 3 1-3 5", "#555", 1.2)}</St>
        <St>{p("M12 2l-8 21 8-6 8 6z", gray, 1, gray)}</St>
        <span className="flex items-center gap-[2px] text-[14px] text-white">1:1<Tri /></span>
      </StatusGroup>
      <StatusGroup w={50}>
        <St>{p("M12 3v18M3 12h18M6 6l12 12M18 6L6 18", "#aaa", 3.2)}{c(12, 12, 6.5, "#aaa", "#aaa", 0)}{c(12, 12, 2.5, "#444", "#444", 0)}</St>
        <Tri />
      </StatusGroup>
      <StatusGroup w={30}><St>{p("M12 3v18M3 12h18", "#cfcfcf", 2.4)}</St></StatusGroup>
      <StatusGroup w={32}><St>{r(3, 2, 8, 9, "none", "#bbb")}{c(17, 11, 4.500, "none", "#bbb")}{p("M8 14l-4 8h8z", "#bbb", 1.2)}</St></StatusGroup>
      <StatusGroup w={34}><St>{c(12, 12, 10, "#0f4a92", "#1f7fe8", 2)}{p("M9 15l5-6", "#9cc8f5", 1.6)}</St></StatusGroup>
      <StatusGroup w={30}><St>{r(4, 9, 14, 11, "#e8c82a", "#665")}{r(8, 2, 8, 8, "#2f70d0", "#dde")}{p("M11 18l3 4 7-8", "#4ea82e", 2.4)}</St></StatusGroup>
      <StatusGroup w={30}><St>{r(3, 4, 18, 15, "#6a6a6a", "#c8c8c8")}{p("M7 15l4-4M7 11v4h4M17 8l-4 4M13 8h4v4", "#ddd", 1.2)}</St></StatusGroup>
      <div className="w-[29px] h-full flex items-center justify-center shrink-0 bg-[#494949] border-t border-[#6b6b6b]"><St>{p("M3 5h18M3 12h18M3 19h18", "#ddd", 2.6)}</St></div>
    </div>
  );
}

function LayoutTab({ label, w, active }: { label: string; w: number; active?: boolean }) {
  return (
    <div
      className={`h-[22px] flex items-center justify-center text-[15px] leading-none shrink-0 [clip-path:polygon(0_0,100%_0,93%_85%,88%_100%,10%_100%,6%_85%)] ${active ? "bg-gradient-to-b from-[#5a5a5a] to-[#8a8a8a] text-white font-bold" : "bg-[#555] text-[#a6a6a6]"}`}
      style={{ width: w }}
    >
      {label}
    </div>
  );
}

function Bottom() {
  return (
    <div className="h-[57px] bg-[#3a3a3a] border-t border-[#505050] flex flex-col justify-between">
      <div className="flex pl-[6px] gap-[3px]">
        <LayoutTab label="模型" w={60} active />
        <LayoutTab label="布局1" w={66} />
        <LayoutTab label="布局2" w={67} />
        <div className="w-[28px] h-[21px] ml-[2px] mt-[1px] bg-[#4a4a4a] rounded-tr-[6px] rounded-bl-[6px] border border-[#5c5c5c] flex items-center justify-center text-[18px] leading-none font-bold text-[#ccc]">+</div>
      </div>
      <StatusBar />
    </div>
  );
}

const menu: [string, string][] = [["文件", "F"], ["编辑", "E"], ["视图", "V"], ["插入", "I"], ["格式", "O"], ["工具", "T"], ["绘图", "D"], ["标注", "N"], ["修改", "M"], ["参数", "P"], ["窗口", "W"], ["帮助", "H"]];

function TitleBar() {
  return (
    <div className="relative flex items-stretch h-[36px] bg-white border-b border-[#555] text-[16px] text-[#1c1c1c]">
      <div className="w-[44px] shrink-0" />
      <div className="flex items-center mt-[5px] w-[267px] pl-[4px] bg-gradient-to-b from-[#a2a2a2] to-[#6c6c6c] border border-[#666] border-b-0 shrink-0">
        <Cell name="new" w={30} /><Cell name="open" w={30} /><Cell name="save" w={30} /><Cell name="saveas" w={30} /><Cell name="print" w={30} />
        <Cell name="undo" w={31} /><Cell name="drop" w={14} /><Cell name="redo" w={31} /><Cell name="dropg" w={14} />
        <svg width="12" height="12" viewBox="0 0 12 12" className="ml-[4px]"><path d="M1 1h10M1 4h10L6 10z" stroke="#222" fill="#222" /></svg>
      </div>
      <span className="ml-[74px] self-center whitespace-nowrap">Autodesk AutoCAD 2018</span>
      <span className="ml-[23px] self-center whitespace-nowrap text-[15.500px]">Drawing1.dwg</span>
      <div className="flex items-center mt-[5px] ml-[75px] w-[557px] bg-gradient-to-b from-[#a8a8a8] to-[#6e6e6e] border border-[#666] border-b-0 shrink-0">
        <svg width="6" height="10" viewBox="0 0 6 10" className="ml-[4px]"><path d="M0 0l6 5-6 5z" fill="#eee" /></svg>
        <div className="ml-[5px] w-[225px] h-[28px] bg-[#6e6e6e] border border-[#333] flex items-center pl-[3px] text-[14px] italic text-[#b3b3b3]">键入关键字或短语</div>
        <svg width="22" height="22" viewBox="0 0 24 24" className="ml-[3px]"><path d="M3 21V10l2-7h4l1 7v11zM14 21V10l1-7h4l2 7v11z" fill="#e8e8e8" stroke="#222" /><path d="M10 9h4v4h-4z" fill="#333" /><path d="M3 12h7M14 12h7" stroke="#222" /></svg>
        <svg width="24" height="24" viewBox="0 0 24 24" className="ml-[7px]"><circle cx="12" cy="8" r="5" fill="#f0f0f0" stroke="#333" /><path d="M3 22c1-6 5-7 9-7s8 1 9 7z" fill="#e8e8e8" stroke="#333" /></svg>
        <span className="ml-[3px] text-[15.500px] text-[#f2f2f2]">登录</span>
        <svg width="7" height="4" viewBox="0 0 7 4" className="ml-[75px]"><path d="M0 0h7L3.500 4z" fill="#222" /></svg>
        <svg width="24" height="24" viewBox="0 0 24 24" className="ml-[11px]"><path d="M2 4h4l3 11h10l2-8H7" fill="#9ec1ef" stroke="#1d3f78" strokeWidth="1.500" /><circle cx="10" cy="20" r="2" fill="#1d3f78" /><circle cx="18" cy="20" r="2" fill="#1d3f78" /></svg>
        <svg width="24" height="24" viewBox="0 0 24 24" className="ml-[6px]"><path d="M10 3h4l7 14-3 4H6l-3-4z" fill="#c8d8f0" stroke="#1d3f78" strokeWidth="1.500" /><circle cx="12" cy="14" r="3" fill="#eef" stroke="#1d3f78" /></svg>
        <svg width="7" height="4" viewBox="0 0 7 4" className="ml-[4px]"><path d="M0 0h7L3.500 4z" fill="#222" /></svg>
        <div className="ml-[13px] w-px h-[28px] bg-[#8d8d8d]" />
        <svg width="24" height="24" viewBox="0 0 24 24" className="ml-[8px]"><circle cx="12" cy="12" r="10" fill="#f4f7fb" stroke="#1f4f99" strokeWidth="1.800" /><path d="M9 9c0-4 6-4 6 0 0 3-3 2-3 5" fill="none" stroke="#1f4f99" strokeWidth="2.400" /><rect x="11" y="16" width="2.400" height="2.400" fill="#1f4f99" /></svg>
        <svg width="7" height="4" viewBox="0 0 7 4" className="ml-[7px]"><path d="M0 0h7L3.500 4z" fill="#222" /></svg>
      </div>
      <div className="flex items-center flex-1 text-[#9a9a9a]">
        <svg width="12" height="2" viewBox="0 0 12 2" className="ml-[54px]"><path d="M0 1h12" stroke="#9a9a9a" /></svg>
        <svg width="12" height="13" viewBox="0 0 12 13" className="ml-[45px]"><rect x=".5" y=".5" width="11" height="12" fill="none" stroke="#9a9a9a" rx="1" /></svg>
        <svg width="14" height="14" viewBox="0 0 14 14" className="ml-[46px]"><path d="M1 1l12 12M13 1L1 13" stroke="#9a9a9a" /></svg>
      </div>
    </div>
  );
}

function MenuBar() {
  return (
    <div className="flex items-center justify-between h-[25px] bg-gradient-to-b from-[#a9a9a9] via-[#7f7f7f] to-[#5c5c5c] text-[15px] leading-none text-[#ececec]">
      <div className="flex gap-[28.300px] pl-[59px]">
        {menu.map(([t, k]) => (
          <span key={k} className="whitespace-nowrap">
            {t}(<span className="underline">{k}</span>)
          </span>
        ))}
      </div>
      <div className="flex items-center gap-[8px] pr-[3px]">
        <svg width="12" height="3" viewBox="0 0 12 3" className="mt-[10px]"><rect width="12" height="3" fill="#222" /></svg>
        <svg width="15" height="15" viewBox="0 0 15 15"><path d="M1 5h9v9H1zM5 5V1h9v9h-4" fill="none" stroke="#222" strokeWidth="1.600" /></svg>
        <svg width="12" height="12" viewBox="0 0 12 12"><path d="M1 1l10 10M11 1L1 11" stroke="#222" strokeWidth="2.600" /></svg>
      </div>
    </div>
  );
}

function TabBar() {
  return (
    <div className="flex items-end h-[31px] bg-[#3b3b3b] pl-[15px]">
      <div className="w-[157px] h-[27px] rounded-t-[12px] bg-gradient-to-b from-[#5c5c5c] to-[#444] border-t border-[#6a6a6a] flex items-center pl-[18px] text-[15px] text-[#9e9e9e]">开始</div>
      <div className="w-[163px] h-[27px] rounded-t-[12px] bg-gradient-to-b from-[#7c7c7c] to-[#484848] border-t border-[#909090] flex items-center pl-[15px] text-[15px] text-[#eaeaea] relative">
        Drawing1*
        <svg width="10" height="10" viewBox="0 0 10 10" className="absolute right-[23px] top-[9px]"><path d="M1 1l8 8M9 1L1 9" stroke="#8c8c8c" strokeWidth="2.400" /></svg>
      </div>
      <div className="w-[25px] h-[22px] ml-[3px] mb-[1px] rounded-t-[6px] bg-[#505050] border border-[#5e5e5e] flex items-center justify-center text-[18px] leading-none font-bold text-[#d8d8d8]">+</div>
    </div>
  );
}

function AppButton() {
  return (
    <div className="absolute left-0 top-[5px] w-[44px] h-[50px] bg-gradient-to-b from-[#a8a8a8] to-[#6a6a6a] border border-[#3a3a3a] border-l-0 overflow-hidden">
      <svg width="44" height="50" viewBox="0 0 44 50">
        <path d="M0 42L14 4h14v38h-10v-9H9l-3 9zM12 26h6V13z" fill="#c8241c" fillRule="evenodd" />
        <path d="M32 25h9l-4.500 5z" fill="#333" />
      </svg>
    </div>
  );
}

export default function App() {
  return (
    <div className="relative w-[1532px] h-[976px] flex flex-col overflow-hidden bg-[#3b3b3b] [font-family:'Noto_Sans','Noto_Sans_CJK_SC',sans-serif]">
      <TitleBar />
      <MenuBar />
      <TabBar />
      <Toolbar1 />
      <Toolbar2 />
      <div className="flex flex-1 bg-[#636363]">
        <div className="w-[62px] flex items-start gap-[3px] pt-[2px] shrink-0">
          <LeftDockA />
          <Dock items={leftB} className="w-[31px]" />
        </div>
        <Canvas />
        <div className="w-[69px] flex items-start gap-[3px] pt-[2px] pl-[5px] shrink-0">
          <div className="flex flex-col gap-[2px]">
            <Dock items={rightA} className="w-[29px]" iconClass="!h-[28px]" />
            <Dock items={rightA2} className="w-[29px]" iconClass="!h-[28px]" />
          </div>
          <Dock items={rightB} className="w-[32px]" iconClass="!h-[28px]" />
        </div>
      </div>
      <Bottom />
      <AppButton />
    </div>
  );
}
